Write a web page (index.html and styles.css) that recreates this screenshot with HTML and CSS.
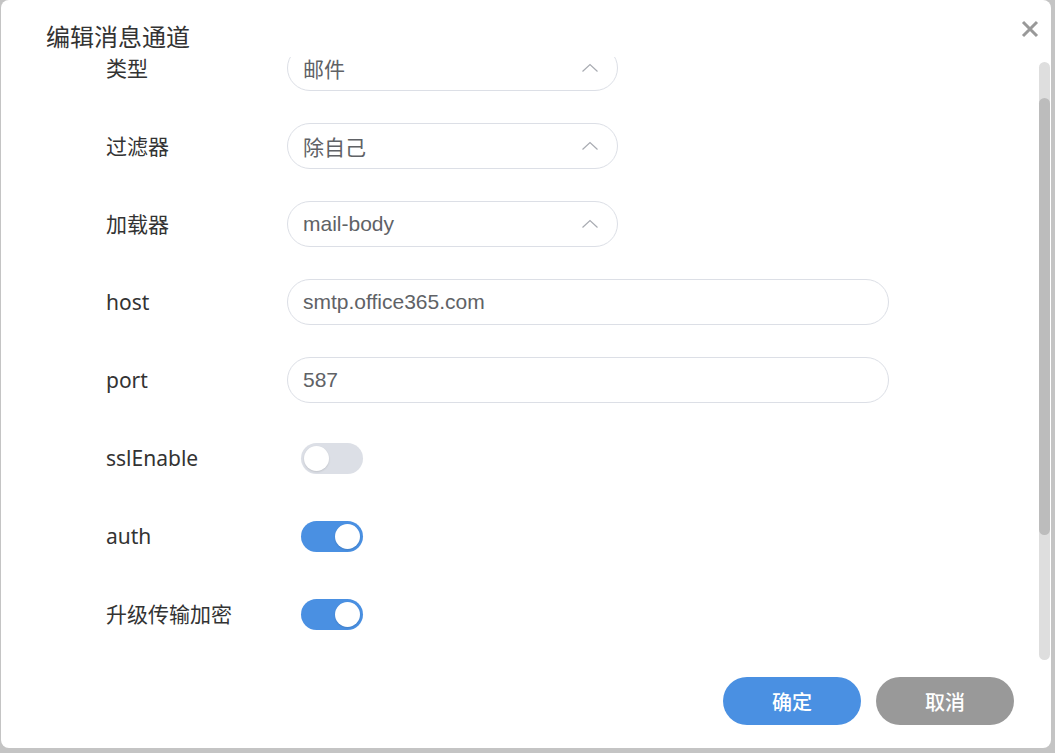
FILE: index.html
```html
<!DOCTYPE html>
<html lang="zh-CN">
<head>
<meta charset="utf-8">
<title>编辑消息通道</title>
<link rel="stylesheet" href="styles.css">
</head>
<body>
<div class="backdrop">
  <div class="dialog">
    <div class="dialog-header">
      <span class="dialog-title">编辑消息通道</span>
      <button class="close-btn" aria-label="关闭">
        <svg width="18" height="18" viewBox="0 0 18 18"><path d="M2 2 L16 16 M16 2 L2 16" stroke="#999" stroke-width="3" fill="none"/></svg>
      </button>
    </div>
    <div class="dialog-body">
      <div class="form">
        <div class="row">
          <div class="label">类型</div>
          <div class="select"><span>邮件</span><svg class="chev" width="18" height="10" viewBox="0 0 18 10"><path d="M1.5 8.5 L9 1.5 L16.5 8.5" stroke="#a8abb2" stroke-width="1.2" fill="none"/></svg></div>
        </div>
        <div class="row">
          <div class="label">过滤器</div>
          <div class="select"><span>除自己</span><svg class="chev" width="18" height="10" viewBox="0 0 18 10"><path d="M1.5 8.5 L9 1.5 L16.5 8.5" stroke="#a8abb2" stroke-width="1.2" fill="none"/></svg></div>
        </div>
        <div class="row">
          <div class="label">加载器</div>
          <div class="select"><span class="latin">mail-body</span><svg class="chev" width="18" height="10" viewBox="0 0 18 10"><path d="M1.5 8.5 L9 1.5 L16.5 8.5" stroke="#a8abb2" stroke-width="1.2" fill="none"/></svg></div>
        </div>
        <div class="row">
          <div class="label">host</div>
          <div class="input"><span class="latin">smtp.office365.com</span></div>
        </div>
        <div class="row">
          <div class="label">port</div>
          <div class="input"><span class="latin">587</span></div>
        </div>
        <div class="row">
          <div class="label">sslEnable</div>
          <div class="switch"></div>
        </div>
        <div class="row">
          <div class="label">auth</div>
          <div class="switch on"></div>
        </div>
        <div class="row">
          <div class="label">升级传输加密</div>
          <div class="switch on"></div>
        </div>
      </div>
      <div class="scrollbar"><div class="thumb"></div></div>
    </div>
    <div class="dialog-footer">
      <button class="btn primary">确定</button>
      <button class="btn secondary">取消</button>
    </div>
  </div>
</div>
</body>
</html>
```

FILE: styles.css
```css
html, body {
  margin: 0;
  padding: 0;
  width: 1055px;
  height: 753px;
  overflow: hidden;
}
body {
  font-family: "Noto Sans", "Noto Sans CJK SC", sans-serif;
  background: #c4c4c4;
}
.backdrop {
  width: 1055px;
  height: 753px;
  padding: 0 0 0 1px;
  box-sizing: border-box;
  background: #c4c4c4;
}
.dialog {
  position: relative;
  width: 1050px;
  height: 748px;
  background: #fff;
  border-radius: 8px;
  display: flex;
  flex-direction: column;
  overflow: hidden;
}
.dialog-header {
  height: 57px;
  flex: none;
  box-sizing: border-box;
  padding: 19px 0 0 45px;
  position: relative;
}
.dialog-title {
  font-family: "Noto Sans CJK SC", sans-serif;
  font-size: 24px;
  line-height: 34px;
  color: #333;
  display: block;
}
.close-btn {
  position: absolute;
  top: 20px;
  right: 12px;
  width: 18px;
  height: 18px;
  padding: 0;
  border: none;
  background: none;
  display: block;
}
.close-btn svg { display: block; }
.dialog-body {
  position: relative;
  height: 603px;
  flex: none;
  overflow: hidden;
}
.form {
  margin-top: -12px;
  padding-left: 105px;
  display: flex;
  flex-direction: column;
  gap: 32px;
}
.row {
  display: flex;
  align-items: center;
  height: 46px;
}
.label {
  width: 181px;
  flex: none;
  font-size: 21px;
  color: #333;
  line-height: 30px;
}
.select, .input {
  height: 46px;
  box-sizing: border-box;
  border: 1.5px solid #dcdfe6;
  border-radius: 23px;
  display: flex;
  align-items: center;
  padding: 0 18px 0 15px;
  font-family: "Noto Sans CJK SC", sans-serif;
  font-size: 21px;
  color: #606266;
}
.select {
  width: 331px;
  justify-content: space-between;
}
.input {
  width: 602px;
}
.latin {
  font-family: "Liberation Sans", "Noto Sans CJK SC", sans-serif;
}
.chev {
  display: block;
}
.switch {
  margin-left: 14px;
  width: 62px;
  height: 31px;
  border-radius: 16px;
  background: #dcdfe6;
  position: relative;
}
.switch::after {
  content: "";
  position: absolute;
  top: 3px;
  left: 3px;
  width: 25px;
  height: 25px;
  border-radius: 50%;
  background: #fff;
  box-shadow: 0 1px 2px rgba(0,0,0,0.12);
}
.switch.on {
  background: #4a90e2;
}
.switch.on::after {
  left: 34px;
}
.scrollbar {
  position: absolute;
  right: 1px;
  top: 5px;
  width: 11px;
  height: 598px;
  border-radius: 6px;
  background: #dedede;
}
.thumb {
  margin-top: 36px;
  height: 437px;
  border-radius: 6px;
  background: #bcbcbc;
}
.dialog-footer {
  flex: none;
  display: flex;
  justify-content: flex-end;
  gap: 15px;
  padding: 17px 37px 0 0;
}
.btn {
  width: 138px;
  height: 48px;
  border: none;
  border-radius: 24px;
  font-family: "Noto Sans CJK SC", sans-serif;
  font-size: 20px;
  font-weight: 500;
  color: #fff;
  padding: 0;
}
.btn.primary { background: #4a90e2; }
.btn.secondary { background: #999; }
```
